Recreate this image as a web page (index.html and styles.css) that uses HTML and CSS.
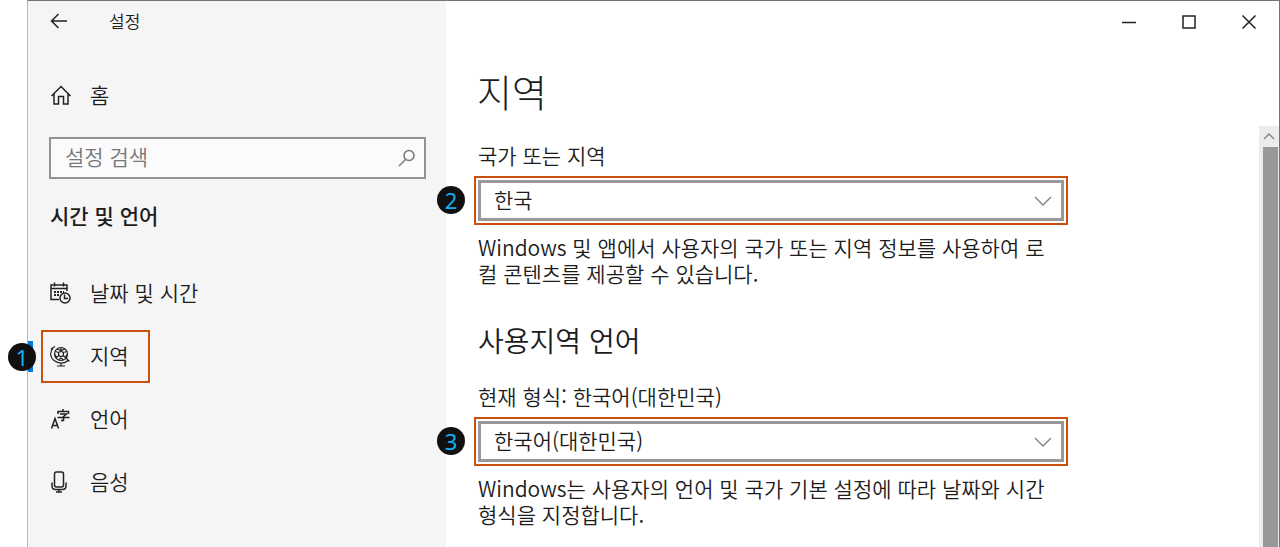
FILE: index.html
```html
<!DOCTYPE html>
<html lang="ko">
<head>
<meta charset="utf-8">
<title>설정</title>
<link rel="stylesheet" href="styles.css">
</head>
<body>
<div class="window">
  <aside class="sidebar">
    <header class="titlebar">
      <button class="back" type="button" aria-label="뒤로">
        <svg width="18" height="16" viewBox="0 0 18 16"><path d="M17 8H2M8.500 1L1.500 8l7 7"/></svg>
      </button>
      <span class="app-name">설정</span>
    </header>
    <a class="item home" href="#">
      <svg class="icon" width="22" height="22" viewBox="0 0 22 22"><path d="M1.500 12L11 2.500l9.500 9.500M4 9.500v10.500h4.500v-7.500h5v7.500H18V9.500"/></svg>
      <span>홈</span>
    </a>
    <div class="search">
      <input type="text" placeholder="설정 검색" aria-label="설정 검색">
      <svg class="search-icon" width="18" height="18" viewBox="0 0 18 18"><circle cx="11" cy="6.500" r="5"/><path d="M7.500 10.500L1 17"/></svg>
    </div>
    <h2 class="group">시간 및 언어</h2>
    <nav class="nav">
      <a class="item" href="#">
        <svg class="icon" width="22" height="22" viewBox="0 0 22 22"><path d="M9 17.500H1V3h16v6M1 6.500h16M4.500 .5v4M13.500 .5v4"/><path class="dots" d="M4 10h10M4 13h6"/><circle cx="15" cy="16" r="5"/><path d="M14.500 12.500v4H18"/></svg>
        <span>날짜 및 시간</span>
      </a>
      <a class="item current" href="#" aria-current="page">
        <svg class="icon globe" width="22" height="22" viewBox="0 0 22 22"><circle cx="11" cy="9" r="6.500"/><circle cx="11" cy="9" r="2.500"/><path d="M5 6.500l4 1M11 2.500v4M17 6.500l-4 1M6 13l3-2.500M16 13l-3-2.500M7 4l4 1.500L15 4M4.500 9l2 3M17.500 9l-2 3M8.500 15l2.500-2 2.500 2M3 3C-.5 7 0 12.500 4 15.500s10 4 14 0M1 4l4-2.500M16 13l3.500 3.500M11 18v3M7 21h8"/></svg>
        <span>지역</span>
        <span class="badge badge-nav">1</span>
      </a>
      <a class="item" href="#">
        <svg class="icon" width="22" height="22" viewBox="0 0 22 22"><path d="M1.500 20.500L5 10.500l3.500 10M2.500 17.500H8M13 1v2.500M8 6V3.500h10.500V6M10 6h6.500L13.500 8.500V12.500h-2.500M7.500 9.500h12"/></svg>
        <span>언어</span>
      </a>
      <a class="item" href="#">
        <svg class="icon" width="22" height="22" viewBox="0 0 22 22"><rect x="4.500" y="1" width="9" height="15" rx="2"/><path d="M2 11.500V15q0 3.500 3.500 3.500h7q3.500 0 3.500-3.500v-3.500M9 18.500V21M6 21h6"/></svg>
        <span>음성</span>
      </a>
    </nav>
  </aside>
  <main class="content">
    <div class="controls">
      <button type="button" aria-label="최소화"><svg width="14" height="14" viewBox="0 0 14 14"><path d="M0 7.500h14"/></svg></button>
      <button type="button" aria-label="최대화"><svg width="14" height="14" viewBox="0 0 14 14"><path d="M1 1h12v12H1z"/></svg></button>
      <button type="button" aria-label="닫기"><svg width="14" height="14" viewBox="0 0 14 14"><path d="M.5.5l13 13M13.500.5l-13 13"/></svg></button>
    </div>
    <h1>지역</h1>
    <div class="body">
      <section class="settings">
        <label for="country">국가 또는 지역</label>
        <div class="field">
          <select id="country"><option>한국</option></select>
          <svg class="chevron" width="18" height="10" viewBox="0 0 18 10"><path d="M1 1l8 8 8-8"/></svg>
          <span class="badge">2</span>
        </div>
        <p>Windows 및 앱에서 사용자의 국가 또는 지역 정보를 사용하여 로<br>컬 콘텐츠를 제공할 수 있습니다.</p>
        <h2>사용지역 언어</h2>
        <label for="format">현재 형식: 한국어(대한민국)</label>
        <div class="field">
          <select id="format"><option>한국어(대한민국)</option></select>
          <svg class="chevron" width="18" height="10" viewBox="0 0 18 10"><path d="M1 1l8 8 8-8"/></svg>
          <span class="badge">3</span>
        </div>
        <p>Windows는 사용자의 언어 및 국가 기본 설정에 따라 날짜와 시간<br>형식을 지정합니다.</p>
      </section>
      <div class="scrollbar">
        <button type="button" aria-label="위로 스크롤"><svg width="12" height="7" viewBox="0 0 12 7"><path d="M1 6l5-5 5 5"/></svg></button>
        <div class="thumb"></div>
      </div>
    </div>
  </main>
</div>
</body>
</html>
```
FILE: styles.css
```css
* { box-sizing: border-box; }
body {
  margin: 0;
  height: 100vh;
  overflow: hidden;
  background: #fff;
  color: #1c1c1c;
  font: 350 21px/26px "Noto Sans CJK KR", sans-serif;
}
h1, h2, p { margin: 0; }
button { border: 0; padding: 0; background: none; display: flex; align-items: center; justify-content: center; }
svg { fill: none; stroke: #222; stroke-width: 1.500; flex: none; }
.window {
  min-height: 100vh;
  margin-left: 27px;
  display: flex;
  border: 1px solid #747474;
  border-left-color: #b8b8b8;
  border-bottom: 0;
}
.sidebar { flex: 0 0 418px; background: #f5f5f5; }
.titlebar { display: flex; align-items: center; height: 40px; padding-left: 22px; gap: 41px; }
.app-name { font-size: 17px; }
.item {
  position: relative;
  display: flex;
  align-items: center;
  gap: 18px;
  height: 53px;
  padding: 0 0 2px 22px;
  color: inherit;
  text-decoration: none;
}
.item > span:not(.badge) { padding-bottom: 2px; }
.home { margin-top: 28px; }
.search { position: relative; margin: 15px 20px 0 21px; }
.search input {
  display: block;
  width: 100%;
  height: 42px;
  padding: 0 40px 4px 14px;
  border: 2px solid #929292;
  border-radius: 0;
  background: #fbfbfb;
  font: inherit;
}
.search input::placeholder { color: #777; opacity: 1; }
.search-icon { position: absolute; right: 10px; top: 12px; stroke: #777; }
.group { margin: 22px 0 0 22px; font-size: 21px; font-weight: 500; line-height: 28px; }
.nav { display: flex; flex-direction: column; gap: 10px; margin-top: 38px; }
.dots { stroke-width: 2; stroke-dasharray: 2 1; }
.globe { stroke-width: 1.200; }
.current { width: 109px; margin-left: 13px; padding-left: 7px; border: 2px solid #c8510f; }
.current::before { content: ""; position: absolute; left: -15px; top: 9px; width: 5px; height: 31px; background: #0078d7; }
.badge {
  position: absolute;
  left: -39px;
  top: 8px;
  width: 28px;
  height: 28px;
  border-radius: 50%;
  background: #101010;
  color: #10b0f8;
  font: 22px/28px "Noto Sans", sans-serif;
  text-align: center;
}
.badge-nav { left: -35px; top: 11px; }
.content { flex: 1; min-width: 0; display: flex; flex-direction: column; }
.controls { display: flex; justify-content: flex-end; height: 42px; }
.controls button { width: 60px; }
h1 { height: 83px; padding: 20px 0 0 31px; font-size: 38px; font-weight: 300; line-height: 56px; }
.body { flex: 1; display: flex; justify-content: space-between; }
.settings { flex: 0 1 621px; padding: 16px 0 0 32px; }
.settings label { display: block; }
.field { position: relative; margin: 8px -1px 0 -4px; padding: 2px; border: 2px solid #c8510f; }
.field select {
  display: block;
  width: 100%;
  height: 41px;
  padding: 0 40px 4px 13px;
  border: 3px solid #999;
  border-radius: 0;
  background: #fff;
  color: inherit;
  font: inherit;
  appearance: none;
}
.chevron { position: absolute; right: 14px; top: 18px; stroke: #888; }
.settings p { margin-top: 9px; }
.settings h2 { margin: 36px 0 25px; font-size: 28px; font-weight: 350; line-height: 36px; }
.scrollbar { width: 20px; display: flex; flex-direction: column; background: #ececec; }
.scrollbar button { height: 21px; }
.scrollbar svg { stroke: #888; }
.thumb { flex: 1; margin: 0 1px 0 4px; background: #989898; }
```
